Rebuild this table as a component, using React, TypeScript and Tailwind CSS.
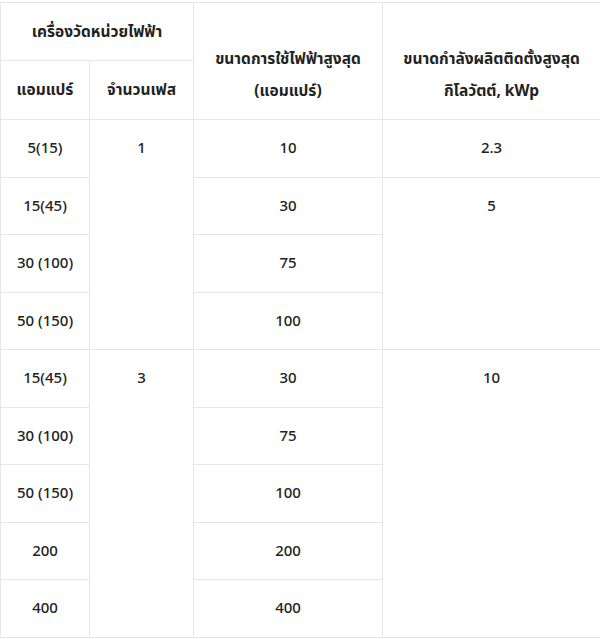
import React from "react"

const cell = "border border-[#e4e6e9] text-center align-top pt-[16px] pb-0 px-2 font-medium"
const font = { fontFamily: '"Noto Sans", "Noto Sans Thai", "Liberation Sans", sans-serif' }

type Row = { amp: string; phase?: string; phaseSpan?: number; max: string; kwp?: string; kwpSpan?: number }

const rows: Row[] = [
	{ amp: "5(15)", phase: "1", phaseSpan: 4, max: "10", kwp: "2.3", kwpSpan: 1 },
	{ amp: "15(45)", max: "30", kwp: "5", kwpSpan: 3 },
	{ amp: "30 (100)", max: "75" },
	{ amp: "50 (150)", max: "100" },
	{ amp: "15(45)", phase: "3", phaseSpan: 6, max: "30", kwp: "10", kwpSpan: 6 },
	{ amp: "30 (100)", max: "75" },
	{ amp: "50 (150)", max: "100" },
	{ amp: "200", max: "200" },
	{ amp: "400", max: "400" },
]

export default function App() {
	return (
		<div className="w-[600px] h-[639px] bg-white pt-[2px]" style={font}>
			<table className="w-[600px] table-fixed border-collapse text-[15px] text-[#222]">
				<colgroup>
					<col className="w-[89px]" />
					<col className="w-[104px]" />
					<col className="w-[189px]" />
					<col className="w-[218px]" />
				</colgroup>
				<thead>
					<tr className="h-[58px]">
						<th colSpan={2} className="border border-[#e4e6e9] font-bold align-middle text-[15.5px]">
							เครื่องวัดหน่วยไฟฟ้า
						</th>
						<th rowSpan={2} className="border border-[#e4e6e9] font-bold align-bottom leading-[32px] pb-[13px] text-[15.5px]">
							ขนาดการใช้ไฟฟ้าสูงสุด
							<br />
							(แอมแปร์)
						</th>
						<th rowSpan={2} className="border border-[#e4e6e9] font-bold align-bottom leading-[32px] pb-[13px] text-[15.5px]">
							ขนาดกำลังผลิตติดตั้งสูงสุด
							<br />
							กิโลวัตต์, kWp
						</th>
					</tr>
					<tr className="h-[59px]">
						<th className="border border-[#e4e6e9] font-bold align-middle text-[15.5px]">แอมแปร์</th>
						<th className="border border-[#e4e6e9] font-bold align-middle text-[15.5px]">จำนวนเฟส</th>
					</tr>
				</thead>
				<tbody>
					{rows.map((r, i) => (
						<tr key={i} className="h-[57.5px]">
							<td className={cell}>{r.amp}</td>
							{r.phase && (
								<td rowSpan={r.phaseSpan} className={cell}>
									{r.phase}
								</td>
							)}
							<td className={cell}>{r.max}</td>
							{r.kwp && (
								<td rowSpan={r.kwpSpan} className={cell}>
									{r.kwp}
								</td>
							)}
						</tr>
					))}
				</tbody>
			</table>
		</div>
	)
}
